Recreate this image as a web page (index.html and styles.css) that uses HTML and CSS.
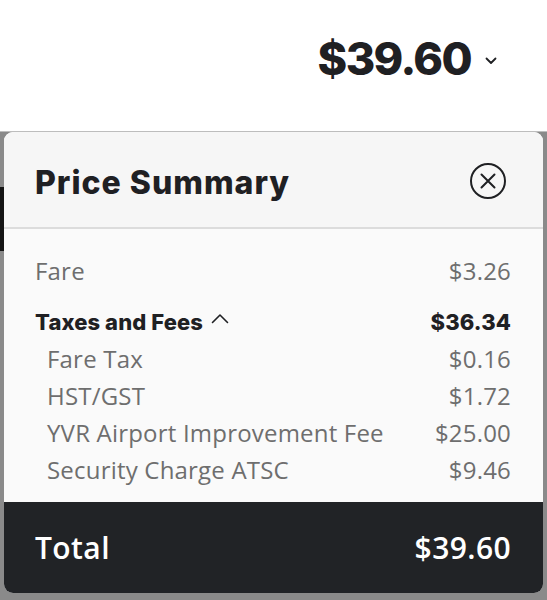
FILE: index.html
```html
<!DOCTYPE html>
<html>
<head>
<meta charset="utf-8">
<link rel="stylesheet" href="styles.css">
</head>
<body>
<div class="topbar">
  <div class="top-price">$39.60</div>
  <svg class="chev" width="12" height="8" viewBox="0 0 12 8"><path d="M1.5 1.5 L6 6 L10.5 1.5" fill="none" stroke="#1f2023" stroke-width="1.8" stroke-linecap="round" stroke-linejoin="round"/></svg>
</div>
<div class="overlay">
  <div class="edge"></div>
  <div class="card">
    <div class="card-head">
      <h1 class="title">Price Summary</h1>
      <svg class="close" width="38" height="38" viewBox="0 0 38 38"><circle cx="19" cy="19" r="17" fill="none" stroke="#1f2023" stroke-width="2"/><path d="M12.5 12.5 L25.5 25.5 M25.5 12.5 L12.5 25.5" stroke="#1f2023" stroke-width="2" stroke-linecap="round"/></svg>
    </div>
    <div class="card-body">
      <div class="row fare"><span>Fare</span><span>$3.26</span></div>
      <div class="row group"><span class="group-label">Taxes and Fees <svg class="caret" width="18" height="11" viewBox="0 0 18 11"><path d="M1.5 9.5 L9 2 L16.5 9.5" fill="none" stroke="#1f2023" stroke-width="1.6" stroke-linecap="round" stroke-linejoin="round"/></svg></span><span>$36.34</span></div>
      <div class="row sub"><span>Fare Tax</span><span>$0.16</span></div>
      <div class="row sub"><span>HST/GST</span><span>$1.72</span></div>
      <div class="row sub"><span>YVR Airport Improvement Fee</span><span>$25.00</span></div>
      <div class="row sub"><span>Security Charge ATSC</span><span>$9.46</span></div>
    </div>
    <div class="card-foot">
      <span>Total</span><span>$39.60</span>
    </div>
  </div>
</div>
</body>
</html>
```

FILE: styles.css
```css
html, body {
  margin: 0;
  padding: 0;
  background: #ffffff;
  font-family: "Open Sans", "Noto Sans", sans-serif;
}

.topbar {
  height: 131px;
  display: flex;
  align-items: center;
  justify-content: flex-end;
  padding-right: 50px;
  box-sizing: border-box;
}

.top-price {
  font-family: Inter, sans-serif;
  font-weight: 800;
  font-size: 45px;
  letter-spacing: -1.6px;
  color: #1f2023;
  line-height: 1;
  margin-top: -14px;
}

.chev {
  margin-left: 14px;
  margin-top: -10px;
}

.overlay {
  position: relative;
  height: 469px;
  background: #8a8a8a;
  padding: 0 4px 7px 4px;
  box-sizing: border-box;
  border-top: 1px solid #bdbdbd;
}

.edge {
  position: absolute;
  left: 0;
  top: 55px;
  width: 4px;
  height: 64px;
  background: #141414;
}

.card {
  height: 100%;
  border-radius: 9px;
  overflow: hidden;
  display: flex;
  flex-direction: column;
  background: #fafafa;
}

.card-head {
  height: 95px;
  flex: none;
  display: flex;
  align-items: center;
  justify-content: space-between;
  padding: 0 36px 0 31px;
  background: #f6f6f6;
  border-bottom: 2px solid #dcdcdc;
}

.title {
  margin: 5px 0 0 0;
  font-family: Inter, sans-serif;
  font-weight: 800;
  font-size: 32px;
  letter-spacing: 1px;
  color: #1f2023;
}

.close {
  display: block;
  margin-top: 2px;
}

.card-body {
  flex: 1;
  padding: 23px 32px 0 31px;
  background: #fafafa;
}

.row {
  display: flex;
  justify-content: space-between;
  align-items: center;
  height: 37px;
  font-size: 24px;
  letter-spacing: 0.2px;
  color: #6e6e6e;
}

.fare {
  margin-bottom: 14px;
}

.group {
  font-family: Inter, sans-serif;
  font-weight: 800;
  font-size: 22px;
  letter-spacing: 0.1px;
  color: #1f2023;
}

.group-label {
  display: flex;
  align-items: center;
}

.caret {
  margin-left: 8px;
  margin-top: -6px;
}

.sub {
  padding-left: 12px;
}

.card-foot {
  height: 91px;
  flex: none;
  display: flex;
  align-items: center;
  justify-content: space-between;
  padding: 0 32px 0 31px;
  background: #212326;
  color: #ffffff;
  font-size: 30px;
  font-weight: 600;
  letter-spacing: 0.4px;
}
```
